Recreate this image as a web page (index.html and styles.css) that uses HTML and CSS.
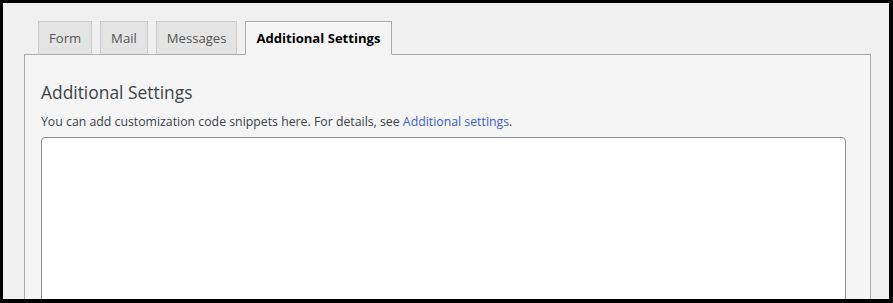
FILE: index.html
```html
<!DOCTYPE html>
<html lang="en">
<head>
    <meta charset="UTF-8">
    <meta name="viewport" content="width=device-width, initial-scale=1.0">
    <title>Additional Settings</title>
    <link rel="stylesheet" href="styles.css">
</head>
<body>
    <div class="wrap">
        <div class="editor">
            <ul class="editor-tabs">
                <li><a href="#">Form</a></li>
                <li><a href="#">Mail</a></li>
                <li><a href="#">Messages</a></li>
                <li class="active"><a href="#">Additional Settings</a></li>
            </ul>
            <div class="editor-panel">
                <h2>Additional Settings</h2>
                <p>You can add customization code snippets here. For details, see <a href="#">Additional settings</a>.</p>
                <textarea class="settings-code" rows="8"></textarea>
            </div>
        </div>
    </div>
</body>
</html>
```

FILE: styles.css
```css
html, body {
    height: 100%;
}

body {
    margin: 0;
    background: #000;
    padding: 3px 4px 4px 3px;
    box-sizing: border-box;
    overflow: hidden;
    font-family: 'Open Sans', 'Noto Sans', sans-serif;
    font-size: 13px;
    color: #3c434a;
}

.wrap {
    height: 100%;
    background: #f0f0f1;
    padding: 9px 18px 0 21px;
    box-sizing: border-box;
    overflow: hidden;
}

.editor-tabs {
    display: flex;
    border-bottom: 1px solid #aaa;
    padding: 9px 15px 0 10px;
    margin: 0;
}

.editor-tabs li {
    list-style: none;
    border: 1px solid #ccc;
    border-bottom: 1px solid #aaa;
    margin: 0 4px -1px;
    background: #e4e4e4;
}

.editor-tabs li a {
    display: block;
    padding: 6px 10px;
    font-size: 13.1px;
    line-height: 20px;
    color: #555;
    text-decoration: none;
}

.editor-tabs li.active {
    border-color: #aaa;
    border-bottom-color: #f5f5f5;
    background: #f5f5f5;
}

.editor-tabs li.active a {
    color: #000;
    font-weight: 700;
}

.editor-panel {
    background: #f5f5f5;
    border: 1px solid #aaa;
    border-top: none;
    padding: 16px;
    height: 400px;
}

.editor-panel h2 {
    margin: 8px 0 0;
    font-size: 17.4px;
    font-weight: 400;
    line-height: 26px;
    color: #3c434a;
}

.editor-panel p {
    margin: 8px 0 6px;
    font-size: 12.3px;
    line-height: 18px;
}

.editor-panel p a {
    color: #3c5bd6;
    text-decoration: none;
}

.settings-code {
    display: block;
    width: 99%;
    height: 200px;
    box-sizing: border-box;
    border: 1px solid #8c8f94;
    border-radius: 4px;
    background: #fff;
    resize: none;
}
```
